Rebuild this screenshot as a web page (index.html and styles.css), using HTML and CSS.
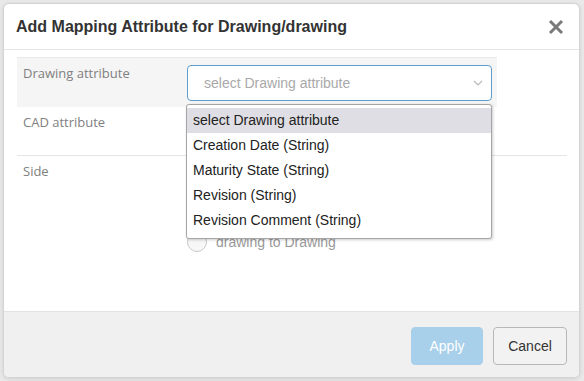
FILE: index.html
```html
<!DOCTYPE html>
<html>
<head>
<meta charset="utf-8">
<link rel="stylesheet" href="styles.css">
</head>
<body>
<div class="page">
  <div class="modal">
    <div class="modal-header">
      <h1 class="title">Add Mapping Attribute for Drawing/drawing</h1>
      <svg class="close" width="16" height="16" viewBox="0 0 16 16"><path d="M2 2L14 14M14 2L2 14" stroke="#7a7a7a" stroke-width="3" stroke-linecap="butt"/></svg>
    </div>
    <div class="modal-body">
      <div class="row row-active">
        <div class="label">Drawing attribute</div>
        <div class="control">
          <div class="select select-focus">
            <span class="placeholder">select Drawing attribute</span>
            <svg class="chev" width="10" height="6" viewBox="0 0 10 6"><path d="M1 1l4 4 4-4" fill="none" stroke="#b9b9b9" stroke-width="1.2"/></svg>
          </div>
          <ul class="dropdown">
            <li class="hl">select Drawing attribute</li>
            <li>Creation Date (String)</li>
            <li>Maturity State (String)</li>
            <li>Revision (String)</li>
            <li>Revision Comment (String)</li>
          </ul>
        </div>
      </div>
      <div class="row row-cad">
        <div class="label">CAD attribute</div>
        <div class="control">
          <div class="select select-plain"></div>
        </div>
      </div>
      <div class="row row-side">
        <div class="label">Side</div>
        <div class="control radios">
          <label class="radio"><span class="circle"></span><span class="rtext">Drawing to drawing</span></label>
          <label class="radio"><span class="circle"></span><span class="rtext">drawing to Drawing</span></label>
        </div>
      </div>
    </div>
    <div class="modal-footer">
      <button class="btn btn-apply">Apply</button>
      <button class="btn btn-cancel">Cancel</button>
    </div>
  </div>
</div>
</body>
</html>
```
FILE: styles.css
```css
html, body {
  margin: 0;
  padding: 0;
  background: #e9e9e9;
  width: 584px;
  height: 381px;
  overflow: hidden;
}
.page {
  padding: 3px 4px 3px 3px;
  height: 381px;
  box-sizing: border-box;
}
.modal {
  height: 375px;
  background: #fff;
  border: 1px solid #d4d4d4;
  border-radius: 6px;
  box-shadow: 0 1px 4px rgba(0,0,0,0.12);
  display: flex;
  flex-direction: column;
  box-sizing: border-box;
  overflow: hidden;
}
.modal-header {
  height: 46px;
  flex: none;
  box-sizing: border-box;
  border-bottom: 1px solid #e5e5e5;
  display: flex;
  align-items: center;
  justify-content: space-between;
  padding: 0 15px 0 12px;
}
.title {
  margin: 0;
  font-family: "Liberation Sans", Arial, sans-serif;
  font-weight: bold;
  font-size: 16px;
  color: #333;
}
.close {
  display: block;
  margin-top: 1px;
}
.modal-body {
  flex: 1;
  padding: 7px 12px 0 13px;
  position: relative;
}
.row {
  display: grid;
  grid-template-columns: 170px 1fr;
  font-family: "Open Sans", sans-serif;
}
.label {
  font-size: 13px;
  color: #808080;
  padding-left: 6px;
}
.row-active {
  width: 480px;
  background: #f5f5f5;
  border-top: 1px solid #e9e9e9;
  padding: 7px 0 6px;
  box-sizing: border-box;
  grid-template-columns: 170px 305px;
}
.row-active .label { margin-top: -1px; }
.row-cad {
  grid-template-columns: 170px 305px;
  padding: 3px 0 6px;
  border-bottom: 1px solid #e5e5e5;
  height: 49px;
  box-sizing: border-box;
}
.row-cad .label { padding-top: 3px; }
.row-side {
  padding-top: 6px;
}
.control {
  position: relative;
}
.select {
  height: 36px;
  box-sizing: border-box;
  border-radius: 4px;
  display: flex;
  align-items: center;
  justify-content: space-between;
  padding: 0 8px 0 16px;
}
.select-focus {
  border: 1px solid #5d9cce;
  background: #fff;
}
.select-plain {
  border: 1px solid #c9c9c9;
  height: 40px;
  background: #fff;
}
.placeholder {
  font-family: "Liberation Sans", Arial, sans-serif;
  font-size: 14px;
  color: #a9a9a9;
}
.dropdown {
  position: absolute;
  left: -1px;
  top: 39px;
  width: 306px;
  margin: 0;
  padding: 3px 0 5px;
  list-style: none;
  background: #fff;
  border: 1px solid #a5a5a5;
  border-radius: 3px;
  box-shadow: 1px 1px 3px rgba(0,0,0,0.2);
  z-index: 10;
  box-sizing: border-box;
}
.dropdown li {
  font-family: "Liberation Sans", Arial, sans-serif;
  font-size: 14px;
  color: #222;
  height: 25px;
  line-height: 25px;
  padding-left: 6px;
}
.dropdown li.hl {
  background: #dfdee4;
}
.radios {
  padding-top: 45px;
  display: flex;
  flex-direction: column;
  gap: 5px;
}
.radio {
  display: flex;
  align-items: center;
  gap: 9px;
  height: 20px;
}
.circle {
  width: 20px;
  height: 20px;
  border: 1px solid #c8c8c8;
  border-radius: 50%;
  background: #f7f7f7;
  box-sizing: border-box;
}
.rtext {
  font-family: "Liberation Sans", Arial, sans-serif;
  font-size: 14px;
  color: #999;
}
.modal-footer {
  height: 66px;
  flex: none;
  box-sizing: border-box;
  border-top: 1px solid #e3e3e3;
  background: #f0f0f0;
  display: flex;
  justify-content: flex-end;
  align-items: flex-start;
  gap: 10px;
  padding: 15px 12px 0 0;
}
.btn {
  height: 38px;
  border-radius: 4px;
  font-family: "Liberation Sans", Arial, sans-serif;
  font-size: 14px;
  padding: 0;
}
.btn-apply {
  width: 72px;
  background: #a9d0ea;
  border: 1px solid #a9d0ea;
  color: #fff;
}
.btn-cancel {
  width: 74px;
  background: #f2f2f2;
  border: 1px solid #b8b8b8;
  color: #333;
}
```
